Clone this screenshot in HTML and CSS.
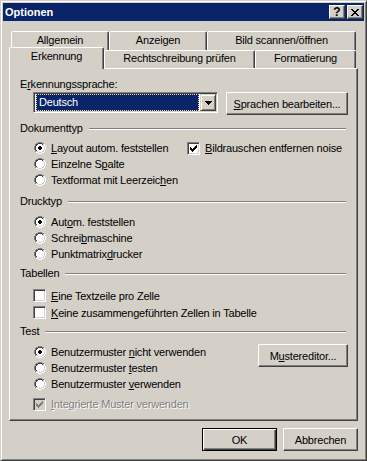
FILE: index.html
```html
<!DOCTYPE html>
<html lang="de">
<head>
<meta charset="utf-8">
<title>Optionen</title>
<link rel="stylesheet" href="styles.css">
</head>
<body>
<svg class="defs" width="0" height="0" aria-hidden="true">
  <symbol id="radio" viewBox="0 0 12 12">
    <path fill="#808080" d="M4 0h4v1H4z M2 1h2v1H2z M8 1h2v1H8z M1 2h1v2H1z M0 4h1v4H0z M1 8h1v2H1z"/>
    <path fill="#ffffff" d="M10 2h1v2h-1z M11 4h1v4h-1z M10 8h1v2h-1z M2 10h2v1H2z M8 10h2v1H8z M4 11h4v1H4z"/>
    <path fill="#404040" d="M4 1h4v1H4z M2 2h2v1H2z M8 2h1v1H8z M2 3h1v1H2z M1 4h1v4H1z M2 8h1v1H2z"/>
    <path fill="#d4d0c8" d="M9 2h1v2H9z M10 4h1v4h-1z M9 8h1v1H9z M2 9h2v1H2z M8 9h2v1H8z M4 10h4v1H4z"/>
    <path fill="#ffffff" d="M4 2h4v1H4z M3 3h6v1H3z M2 4h8v4H2z M3 8h6v1H3z M4 9h4v1H4z"/>
  </symbol>
  <symbol id="check" viewBox="0 0 7 7">
    <path d="M6 0h1v1H6z M5 1h2v1H5z M0 2h1v1H0z M4 2h3v1H4z M0 3h2v1H0z M3 3h3v1H3z M0 4h5v1H0z M1 5h3v1H1z M2 6h1v1H2z"/>
  </symbol>
</svg>
<div class="window">
  <div class="titlebar">
    <span class="title">Optionen</span>
    <span class="cap-btn help">?</span>
    <span class="cap-btn close">
      <svg class="x-glyph" width="8" height="7" viewBox="0 0 8 7"><path d="M0 0h2v1H0z M6 0h2v1H6z M1 1h2v1H1z M5 1h2v1H5z M2 2h4v1H2z M3 3h2v1H3z M2 4h4v1H2z M1 5h2v1H1z M5 5h2v1H5z M0 6h2v1H0z M6 6h2v1H6z"/></svg>
    </span>
  </div>
  <div class="body">
    <div class="tab-row back">
      <div class="tab w-allg">Allgemein</div>
      <div class="tab w-anz">Anzeigen</div>
      <div class="tab w-bild">Bild scannen/öffnen</div>
    </div>
    <div class="tab-row front">
      <div class="tab selected w-erk">Erkennung</div>
      <div class="tab w-rech">Rechtschreibung prüfen</div>
      <div class="tab w-form">Formatierung</div>
    </div>
    <div class="panel">
      <div class="label-row">E<u>r</u>kennungssprache:</div>
      <div class="combo-row">
        <div class="combo">
          <div class="combo-sel">Deutsch</div>
          <div class="combo-btn">
            <svg width="7" height="4" viewBox="0 0 7 4"><path d="M0 0h7v1H0z M1 1h5v1H1z M2 2h3v1H2z M3 3h1v1H3z"/></svg>
          </div>
        </div>
        <button class="btn w-sprachen"><u>S</u>prachen bearbeiten...</button>
      </div>

      <div class="group g-doc"><span>Dokumenttyp</span><span class="etch"></span></div>
      <div class="opts o-doc">
        <div class="opt-line">
          <div class="opt w-layout"><svg class="radio" viewBox="0 0 12 12"><use href="#radio"/><path class="dot" d="M5 4h2v1H5z M4 5h4v2H4z M5 7h2v1H5z"/></svg><span><u>L</u>ayout autom. feststellen</span></div>
          <div class="opt"><span class="check"><svg width="7" height="7"><use href="#check"/></svg></span><span><u>B</u>ildrauschen entfernen noise</span></div>
        </div>
        <div class="opt"><svg class="radio" viewBox="0 0 12 12"><use href="#radio"/></svg><span>Einzelne S<u>p</u>alte</span></div>
        <div class="opt"><svg class="radio" viewBox="0 0 12 12"><use href="#radio"/></svg><span>Textformat mit Leerzeic<u>h</u>en</span></div>
      </div>

      <div class="group g-druck"><span>Drucktyp</span><span class="etch"></span></div>
      <div class="opts o-druck">
        <div class="opt"><svg class="radio" viewBox="0 0 12 12"><use href="#radio"/><path class="dot" d="M5 4h2v1H5z M4 5h4v2H4z M5 7h2v1H5z"/></svg><span>Aut<u>o</u>m. feststellen</span></div>
        <div class="opt"><svg class="radio" viewBox="0 0 12 12"><use href="#radio"/></svg><span>Schrei<u>b</u>maschine</span></div>
        <div class="opt"><svg class="radio" viewBox="0 0 12 12"><use href="#radio"/></svg><span>Punktmatrix<u>d</u>rucker</span></div>
      </div>

      <div class="group g-tab"><span>Tabellen</span><span class="etch"></span></div>
      <div class="opts o-tab">
        <div class="opt tall"><span class="check"></span><span><u>E</u>ine Textzeile pro Zelle</span></div>
        <div class="opt tall"><span class="check"></span><span><u>K</u>eine zusammengeführten Zellen in Tabelle</span></div>
      </div>

      <div class="group g-test"><span>Test</span><span class="etch"></span></div>
      <div class="test-row">
        <div class="opts">
          <div class="opt"><svg class="radio" viewBox="0 0 12 12"><use href="#radio"/><path class="dot" d="M5 4h2v1H5z M4 5h4v2H4z M5 7h2v1H5z"/></svg><span>Benutzermuster <u>n</u>icht verwenden</span></div>
          <div class="opt"><svg class="radio" viewBox="0 0 12 12"><use href="#radio"/></svg><span>Benutzermuster <u>t</u>esten</span></div>
          <div class="opt"><svg class="radio" viewBox="0 0 12 12"><use href="#radio"/></svg><span>Benutzermuster <u>v</u>erwenden</span></div>
        </div>
        <button class="btn w-muster">M<u>u</u>stereditor...</button>
      </div>
      <div class="opts o-int">
        <div class="opt disabled"><span class="check"><svg width="7" height="7"><use href="#check"/></svg></span><span><u>I</u>ntegrierte Muster verwenden</span></div>
      </div>
    </div>
    <div class="dialog-buttons">
      <button class="btn default">OK</button>
      <button class="btn">Abbrechen</button>
    </div>
  </div>
</div>
</body>
</html>
```
FILE: styles.css
```css
* { box-sizing: border-box; }
html, body { margin: 0; padding: 0; }
body {
  width: 367px;
  height: 461px;
  overflow: hidden;
  background: #d4d0c8;
  font-family: "Liberation Sans", Arial, sans-serif;
  font-size: 11px;
  letter-spacing: -0.2px;
  color: #000;
}
.defs { position: absolute; width: 0; height: 0; overflow: hidden; }
u { text-decoration: underline; text-underline-offset: 1px; text-decoration-thickness: 1px; }

.window {
  width: 367px;
  height: 461px;
  border: 1px solid;
  border-color: #d4d0c8 #404040 #404040 #d4d0c8;
  box-shadow: inset 1px 1px #fff, inset -1px -1px #808080;
  padding: 2px;
  background: #d4d0c8;
  display: flex;
  flex-direction: column;
}

/* title bar */
.titlebar {
  height: 18px;
  flex: none;
  background: #0a246a;
  display: flex;
  align-items: center;
  padding: 0 1px 0 2px;
}
.title {
  flex: 1;
  color: #fff;
  font-weight: bold;
  line-height: 18px;
  letter-spacing: 0;
}
.cap-btn {
  width: 16px;
  height: 14px;
  background: #d4d0c8;
  border: 1px solid;
  border-color: #fff #404040 #404040 #fff;
  box-shadow: inset -1px -1px #808080;
  display: flex;
  align-items: center;
  justify-content: center;
}
.help {
  margin-right: 2px;
  font-weight: bold;
  font-size: 12px;
  line-height: 12px;
  letter-spacing: 0;
}
.x-glyph { display: block; }

/* body */
.body {
  flex: 1;
  padding: 10px 6px 0 6px;
  display: flex;
  flex-direction: column;
}

/* tabs */
.tab-row {
  display: flex;
  margin-left: 2px;
  flex: none;
}
.tab-row.back { height: 19px; }
.tab-row.front { height: 18px; }
.tab {
  height: 100%;
  border-top: 1px solid #fff;
  border-left: 1px solid #fff;
  border-right: 1px solid #404040;
  box-shadow: inset -1px 0 #808080;
  border-radius: 2px 2px 0 0;
  text-align: center;
  background: #d4d0c8;
  white-space: nowrap;
}
.back .tab { line-height: 17px; }
.front .tab { line-height: 15px; }
.front .tab.selected {
  position: relative;
  z-index: 2;
  height: 22px;
  margin-top: -3px;
  margin-left: -2px;
  line-height: 16px;
}
.w-allg { width: 98px; }
.w-anz { width: 98px; }
.w-bild { width: 149px; }
.w-erk { width: 95px; }
.w-rech { width: 151px; }
.w-form { width: 101px; }

/* panel */
.panel {
  height: 353px;
  flex: none;
  border: 1px solid;
  border-color: #fff #404040 #404040 #fff;
  box-shadow: inset -1px -1px #808080;
  padding: 7px 9px 0 10px;
  display: flex;
  flex-direction: column;
}
.label-row { height: 16px; line-height: 16px; }

.combo-row {
  display: flex;
  align-items: flex-start;
  margin-left: 13px;
  gap: 8px;
  height: 23px;
}
.combo {
  width: 185px;
  height: 21px;
  border: 1px solid;
  border-color: #808080 #fff #fff #808080;
  box-shadow: inset 1px 1px #404040, inset -1px -1px #d4d0c8;
  background: #fff;
  padding: 1px 1px 1px 2px;
  display: flex;
}
.combo-sel {
  flex: 1;
  margin-right: 1px;
  background: #0a246a;
  color: #fff;
  border: 1px dotted #f0d890;
  line-height: 15px;
  padding-left: 2px;
}
.combo-btn {
  width: 16px;
  height: 17px;
  background: #d4d0c8;
  border: 1px solid;
  border-color: #d4d0c8 #404040 #404040 #d4d0c8;
  box-shadow: inset 1px 1px #fff, inset -1px -1px #808080;
  display: flex;
  align-items: center;
  justify-content: center;
}
.combo-btn svg { display: block; }

.btn {
  height: 23px;
  padding: 0;
  margin: 0;
  font-family: "Liberation Sans", Arial, sans-serif;
  font-size: 11px;
  letter-spacing: -0.2px;
  color: #000;
  background: #d4d0c8;
  border: 1px solid;
  border-color: #fff #404040 #404040 #fff;
  box-shadow: inset -1px -1px #808080;
  border-radius: 0;
  text-align: center;
}
.w-sprachen { width: 122px; }
.w-muster { width: 90px; margin-left: auto; }

/* groups */
.group {
  display: flex;
  height: 16px;
  line-height: 16px;
  margin-right: 2px;
}
.etch {
  flex: 1;
  height: 2px;
  margin-top: 8px;
  margin-left: 6px;
  border-top: 1px solid #808080;
  border-bottom: 1px solid #fff;
}
.g-doc { margin-top: 5px; }
.g-druck { margin-top: 5px; }
.g-tab { margin-top: 3px; }
.g-test { margin-top: 2px; }

.opts { margin-left: 13px; display: flex; flex-direction: column; }
.o-doc { margin-top: 4px; }
.o-druck { margin-top: 5px; }
.o-tab { margin-top: 6px; }
.o-int { margin-top: 4px; }

.opt-line { display: flex; }
.opt {
  display: flex;
  align-items: center;
  height: 16px;
  line-height: 16px;
  white-space: nowrap;
}
.opt.tall { height: 17px; }
.w-layout { width: 154px; }

.radio {
  width: 12px;
  height: 12px;
  margin-left: 1px;
  margin-right: 5px;
  flex: none;
  shape-rendering: crispEdges;
}
.dot { fill: #000; }

.check {
  width: 13px;
  height: 13px;
  flex: none;
  margin-right: 5px;
  border: 1px solid;
  border-color: #808080 #fff #fff #808080;
  box-shadow: inset 1px 1px #404040, inset -1px -1px #d4d0c8;
  background: #fff;
  display: flex;
  align-items: center;
  justify-content: center;
}
.check svg { display: block; fill: #000; shape-rendering: crispEdges; }

.disabled { color: #808080; text-shadow: 1px 1px 0 #fff; }
.disabled .check { background: #d4d0c8; }
.disabled .check svg { fill: #808080; }

.test-row {
  display: flex;
  align-items: flex-start;
  margin-top: 5px;
}
.test-row .opts { flex: none; }

/* dialog buttons */
.dialog-buttons {
  display: flex;
  justify-content: flex-end;
  gap: 6px;
  margin-top: 7px;
}
.dialog-buttons .btn { width: 75px; }
.btn.default {
  border: 1px solid #000;
  box-shadow: inset 1px 1px #fff, inset -1px -1px #404040, inset -2px -2px #808080;
}
```
